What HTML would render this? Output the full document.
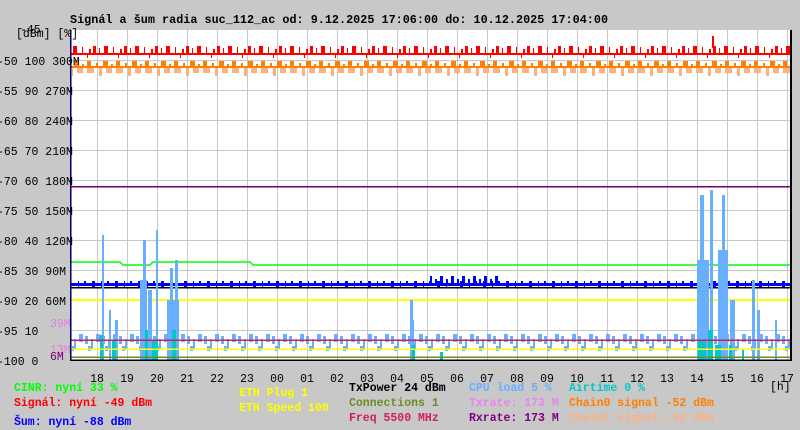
<!DOCTYPE html>
<html><head><meta charset="utf-8"><style>
body{margin:0;background:#c8c8c8;}
svg{display:block;}
text{font-family:"Liberation Mono",monospace;}
.ax{font-size:11.5px;fill:#000;}
.lg{font-size:11.5px;font-weight:bold;}
</style></head><body>
<svg width="800" height="430" xmlns="http://www.w3.org/2000/svg">
<defs>
<pattern id="nz1" x="0" y="46" width="31" height="12" patternUnits="userSpaceOnUse"><rect x="0" y="0" width="3" height="8" fill="#ff0000"/><rect x="6" y="2" width="1" height="6" fill="#ff0000"/><rect x="11" y="0" width="4" height="8" fill="#ff0000"/><rect x="20" y="1" width="1" height="7" fill="#ff0000"/><rect x="25" y="8" width="1" height="4" fill="#ff0000"/><rect x="27" y="3" width="2" height="5" fill="#ff0000"/></pattern>
<pattern id="nz2" x="0" y="61" width="29" height="20" patternUnits="userSpaceOnUse"><rect x="0" y="0" width="4" height="6" fill="#ff8000"/><rect x="9" y="2" width="2" height="4" fill="#ff8000"/><rect x="16" y="0" width="5" height="6" fill="#ff8000"/><rect x="24" y="3" width="2" height="3" fill="#ff8000"/><rect x="0" y="7" width="7" height="5" fill="#ffb080"/><rect x="12" y="7" width="3" height="8" fill="#ffb080"/><rect x="19" y="7" width="6" height="5" fill="#ffb080"/></pattern>
<pattern id="nz3" x="0" y="334" width="17" height="20" patternUnits="userSpaceOnUse"><rect x="0" y="2" width="3" height="8" fill="#68b0ff"/><rect x="6" y="5" width="2" height="10" fill="#68b0ff"/><rect x="11" y="0" width="4" height="8" fill="#68b0ff"/><rect x="3" y="12" width="3" height="5" fill="#68b0ff"/></pattern>
<pattern id="nz4" x="0" y="281" width="23" height="6" patternUnits="userSpaceOnUse"><rect x="0" y="0" width="3" height="6" fill="#0000ff"/><rect x="9" y="0" width="1" height="6" fill="#0000ff"/><rect x="15" y="0" width="2" height="4" fill="#0000ff"/></pattern>
<pattern id="nz5" x="0" y="276" width="11" height="7" patternUnits="userSpaceOnUse"><rect x="0" y="0" width="3" height="7" fill="#0000ff"/><rect x="6" y="3" width="2" height="4" fill="#0000ff"/></pattern>
</defs>
<rect x="0" y="0" width="800" height="430" fill="#c8c8c8"/>
<text x="70" y="23" style="font-size:11.8px;font-weight:bold">Signál a šum radia suc_112_ac od: 9.12.2025 17:06:00 do: 10.12.2025 17:04:00</text>
<rect x="71" y="30" width="719" height="330" fill="#fff"/>
<g stroke="#c8c8c8" stroke-width="1">
<path d="M97.5 30V360M127.5 30V360M157.5 30V360M187.5 30V360M217.5 30V360M247.5 30V360M277.5 30V360M307.5 30V360M337.5 30V360M367.5 30V360M397.5 30V360M427.5 30V360M457.5 30V360M487.5 30V360M517.5 30V360M547.5 30V360M577.5 30V360M607.5 30V360M637.5 30V360M667.5 30V360M697.5 30V360M727.5 30V360M757.5 30V360M787.5 30V360"/>
<path d="M71 60.5H790M71 90.5H790M71 120.5H790M71 150.5H790M71 180.5H790M71 210.5H790M71 240.5H790M71 270.5H790M71 300.5H790M71 330.5H790"/>
</g>
<rect x="72" y="46" width="718" height="12" fill="url(#nz1)"/>
<rect x="71" y="53" width="719" height="2" fill="#ff0000"/>
<rect x="712" y="36" width="2" height="12" fill="#ff0000"/>
<rect x="72" y="61" width="718" height="20" fill="url(#nz2)"/>
<rect x="71" y="66" width="719" height="2" fill="#ff8000"/>
<rect x="71" y="186" width="719" height="1.5" fill="#700070"/>
<path d="M71 262H120L123 265H150L153 262H250L253 265H790" stroke="#00ff00" stroke-width="1.5" fill="none"/>
<rect x="72" y="281" width="718" height="6" fill="url(#nz4)"/>
<rect x="71" y="283" width="719" height="3" fill="#0000ff"/>
<rect x="430" y="276" width="70" height="7" fill="url(#nz5)"/>
<rect x="71" y="287" width="719" height="1.5" fill="#000"/>
<rect x="71" y="299" width="719" height="2" fill="#ffff00"/>
<rect x="72" y="334" width="718" height="20" fill="url(#nz3)"/>
<g fill="#68b0ff">
<rect x="102" y="235" width="2" height="125"/><rect x="109" y="310" width="2" height="50"/><rect x="115" y="320" width="3" height="40"/>
<rect x="143" y="240" width="3" height="120"/><rect x="140" y="280" width="7" height="80"/><rect x="148" y="290" width="4" height="70"/>
<rect x="156" y="230" width="2" height="130"/>
<rect x="170" y="268" width="3" height="92"/><rect x="175" y="260" width="3" height="100"/><rect x="167" y="300" width="12" height="60"/>
<rect x="410" y="300" width="3" height="60"/><rect x="412" y="320" width="2" height="40"/>
<rect x="700" y="195" width="4" height="165"/><rect x="697" y="260" width="12" height="100"/><rect x="710" y="190" width="3" height="170"/>
<rect x="722" y="195" width="3" height="165"/><rect x="718" y="250" width="10" height="110"/><rect x="730" y="300" width="5" height="60"/>
<rect x="752" y="280" width="3" height="80"/><rect x="757" y="310" width="3" height="50"/><rect x="775" y="320" width="2" height="40"/>
</g>
<g fill="#00c8c8">
<rect x="100" y="335" width="3" height="25"/><rect x="112" y="340" width="4" height="20"/><rect x="145" y="330" width="3" height="30"/><rect x="152" y="340" width="6" height="20"/><rect x="172" y="330" width="4" height="30"/>
<rect x="412" y="345" width="3" height="15"/><rect x="440" y="352" width="3" height="8"/>
<rect x="698" y="340" width="8" height="20"/><rect x="708" y="330" width="5" height="30"/><rect x="715" y="345" width="6" height="15"/><rect x="729" y="345" width="3" height="15"/><rect x="742" y="350" width="2" height="10"/>
</g>
<rect x="71" y="339.5" width="719" height="1.5" fill="#d02060"/>
<rect x="71" y="348.5" width="719" height="1.5" fill="#ffff00"/>
<rect x="71" y="356.5" width="719" height="1.5" fill="#6b8e23"/>
<rect x="70" y="30" width="1.5" height="331" fill="#000"/>
<rect x="70" y="359.5" width="722" height="1.5" fill="#000"/>
<rect x="790" y="30" width="2" height="331" fill="#000"/>
<rect x="70" y="30" width="1" height="330" fill="#0000ff" opacity="0.6"/>
<g class="ax">
<text x="16" y="37">[dBm] [%]</text>
<text x="20" y="33">-45</text>
<text x="-3" y="65">-50 100 300M</text>
<text x="-3" y="95">-55 90 270M</text>
<text x="-3" y="125">-60 80 240M</text>
<text x="-3" y="155">-65 70 210M</text>
<text x="-3" y="185">-70 60 180M</text>
<text x="-3" y="215">-75 50 150M</text>
<text x="-3" y="245">-80 40 120M</text>
<text x="-3" y="275">-85 30 90M</text>
<text x="-3" y="305">-90 20 60M</text>
<text x="-3" y="335">-95 10</text>
<text x="-3" y="365">-100 0</text>
<text x="50" y="327" style="fill:#e080e0">39M</text>
<text x="50" y="353" style="fill:#e080e0">13M</text>
<text x="50" y="360" style="fill:#700070">6M</text>
</g>
<g class="ax" text-anchor="middle">
<text x="97" y="382">18</text><text x="127" y="382">19</text><text x="157" y="382">20</text><text x="187" y="382">21</text><text x="217" y="382">22</text><text x="247" y="382">23</text><text x="277" y="382">00</text><text x="307" y="382">01</text><text x="337" y="382">02</text><text x="367" y="382">03</text><text x="397" y="382">04</text><text x="427" y="382">05</text><text x="457" y="382">06</text><text x="487" y="382">07</text><text x="517" y="382">08</text><text x="547" y="382">09</text><text x="577" y="382">10</text><text x="607" y="382">11</text><text x="637" y="382">12</text><text x="667" y="382">13</text><text x="697" y="382">14</text><text x="727" y="382">15</text><text x="757" y="382">16</text><text x="787" y="382">17</text>
</g>
<text class="ax" x="770" y="390">[h]</text>
<g class="lg">
<text x="14" y="391" fill="#00ff00">CINR: nyní 33 %</text>
<text x="14" y="406" fill="#ff0000">Signál: nyní -49 dBm</text>
<text x="14" y="425" fill="#0000ff">Šum: nyní -88 dBm</text>
<text x="239" y="396" fill="#ffff00">ETH Plug 1</text>
<text x="239" y="411" fill="#ffff00">ETH Speed 100</text>
<text x="349" y="391" fill="#000">TxPower 24 dBm</text>
<text x="349" y="406" fill="#6b8e23">Connections 1</text>
<text x="349" y="421" fill="#d02060">Freq 5500 MHz</text>
<text x="469" y="391" fill="#68b0ff">CPU load 5 %</text>
<text x="469" y="406" fill="#ee82ee">Txrate: 173 M</text>
<text x="469" y="421" fill="#800080">Rxrate: 173 M</text>
<text x="569" y="391" fill="#00c8c8">Airtime 0 %</text>
<text x="569" y="406" fill="#ff8000">Chain0 signal -52 dBm</text>
<text x="569" y="421" fill="#ffb080">Chain1 signal -52 dBm</text>
</g>
</svg>
</body></html>
